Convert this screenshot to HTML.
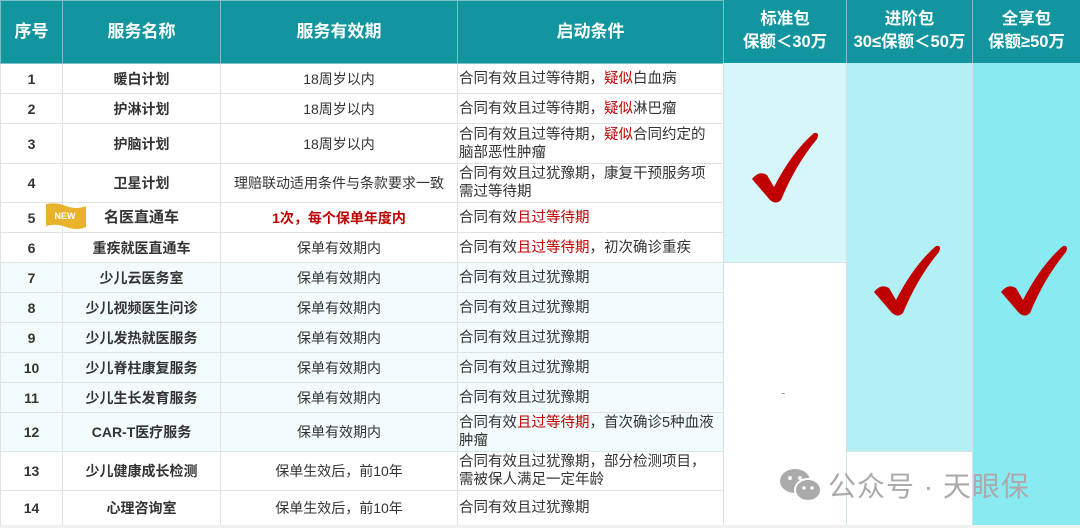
<!DOCTYPE html>
<html><head><meta charset="utf-8">
<style>
*{margin:0;padding:0;box-sizing:border-box}
body{width:1080px;height:528px;background:#fff;font-family:"Liberation Sans","Noto Sans CJK SC",sans-serif;position:relative;overflow:hidden;color:#333}
table{position:absolute;left:0;top:0;border-collapse:collapse;table-layout:fixed;width:723px}
td,th{border:1px solid #dfe3e6;font-size:14px;text-align:center;vertical-align:middle;padding:0;line-height:18px}
th{background:#13959f;color:#fff;font-size:17px;font-weight:bold;border-color:#7cbfc5;height:63px}
td.n{font-weight:bold;color:#333}
td.s{font-weight:bold;color:#333}
td.c{text-align:left;padding-left:1px;font-size:14.5px}
tr.l td{background:#f2fcfd}
.r{color:#c00000}
.hd{position:absolute;top:0;height:63px;background:#13959f;color:#fff;font-weight:bold;font-size:16.5px;text-align:center;line-height:23px;padding-top:8px;border-left:1px solid #7cbfc5}
.col{position:absolute;border-left:1px solid #d0e4e6}
.chk{position:absolute;width:70px;height:72px}
.new{position:absolute;left:45px;top:203px;width:42px;height:27px}
.wm{position:absolute;left:778px;top:465px;font-size:28px;color:#aaa;letter-spacing:1px}
</style></head><body>
<table>
<colgroup><col style="width:62px"><col style="width:158px"><col style="width:237px"><col style="width:266px"></colgroup>
<tr><th>序号</th><th>服务名称</th><th>服务有效期</th><th>启动条件</th></tr>
<tr style="height:30px"><td class="n">1</td><td class="s">暖白计划</td><td>18周岁以内</td><td class="c">合同有效且过等待期，<span class="r">疑似</span>白血病</td></tr>
<tr style="height:30px"><td class="n">2</td><td class="s">护淋计划</td><td>18周岁以内</td><td class="c">合同有效且过等待期，<span class="r">疑似</span>淋巴瘤</td></tr>
<tr style="height:40px"><td class="n">3</td><td class="s">护脑计划</td><td>18周岁以内</td><td class="c">合同有效且过等待期，<span class="r">疑似</span>合同约定的<br>脑部恶性肿瘤</td></tr>
<tr style="height:39px"><td class="n">4</td><td class="s">卫星计划</td><td>理赔联动适用条件与条款要求一致</td><td class="c">合同有效且过犹豫期，康复干预服务项<br>需过等待期</td></tr>
<tr style="height:30px"><td class="n">5</td><td class="s" style="font-size:15px">名医直通车</td><td class="r" style="font-weight:bold">1次，每个保单年度内</td><td class="c">合同有效<span class="r">且过等待期</span></td></tr>
<tr style="height:30px"><td class="n">6</td><td class="s">重疾就医直通车</td><td>保单有效期内</td><td class="c">合同有效<span class="r">且过等待期</span>，初次确诊重疾</td></tr>
<tr class="l" style="height:30px"><td class="n">7</td><td class="s">少儿云医务室</td><td>保单有效期内</td><td class="c">合同有效且过犹豫期</td></tr>
<tr class="l" style="height:30px"><td class="n">8</td><td class="s">少儿视频医生问诊</td><td>保单有效期内</td><td class="c">合同有效且过犹豫期</td></tr>
<tr class="l" style="height:30px"><td class="n">9</td><td class="s">少儿发热就医服务</td><td>保单有效期内</td><td class="c">合同有效且过犹豫期</td></tr>
<tr class="l" style="height:30px"><td class="n">10</td><td class="s">少儿脊柱康复服务</td><td>保单有效期内</td><td class="c">合同有效且过犹豫期</td></tr>
<tr class="l" style="height:30px"><td class="n">11</td><td class="s">少儿生长发育服务</td><td>保单有效期内</td><td class="c">合同有效且过犹豫期</td></tr>
<tr class="l" style="height:39px"><td class="n">12</td><td class="s">CAR-T医疗服务</td><td>保单有效期内</td><td class="c">合同有效<span class="r">且过等待期</span>，首次确诊5种血液<br>肿瘤</td></tr>
<tr style="height:39px"><td class="n">13</td><td class="s">少儿健康成长检测</td><td>保单生效后，前10年</td><td class="c">合同有效且过犹豫期，部分检测项目，<br>需被保人满足一定年龄</td></tr>
<tr style="height:35px"><td class="n">14</td><td class="s">心理咨询室</td><td>保单生效后，前10年</td><td class="c">合同有效且过犹豫期</td></tr>
</table>
<div class="hd" style="left:723px;width:123px">标准包<br>保额＜30万</div>
<div class="hd" style="left:846px;width:126px">进阶包<br>30≤保额＜50万</div>
<div class="hd" style="left:972px;width:108px">全享包<br>保额≥50万</div>
<div class="col" style="left:723px;top:63px;width:123px;height:199px;background:#d6f6f9"></div>
<div class="col" style="left:723px;top:262px;width:123px;height:263px;background:#fff;border-top:1px solid #dfe3e6"></div>
<div class="col" style="left:846px;top:63px;width:126px;height:388px;background:#b2f0f5"></div>
<div class="col" style="left:846px;top:451px;width:126px;height:74px;background:#fff;border-top:1px solid #dfe3e6"></div>
<div class="col" style="left:972px;top:63px;width:108px;height:462px;background:#8aeaf2"></div>
<div style="position:absolute;left:0;top:525px;width:1080px;height:3px;background:#eef0f1"></div>
<div style="position:absolute;left:781px;top:385px;font-size:13px;color:#999">-</div>
<svg class="chk" style="left:750px;top:132px" viewBox="0 0 70 72"><path d="M2 47 Q9 38 17 43 L24 55 Q42 20 64 1 Q70 0 67 7 Q46 32 31 68 Q26 73 20 68 Z" fill="#c00000"/></svg>
<svg class="chk" style="left:872px;top:245px" viewBox="0 0 70 72"><path d="M2 47 Q9 38 17 43 L24 55 Q42 20 64 1 Q70 0 67 7 Q46 32 31 68 Q26 73 20 68 Z" fill="#c00000"/></svg>
<svg class="chk" style="left:999px;top:245px" viewBox="0 0 70 72"><path d="M2 47 Q9 38 17 43 L24 55 Q42 20 64 1 Q70 0 67 7 Q46 32 31 68 Q26 73 20 68 Z" fill="#c00000"/></svg>
<svg class="new" viewBox="0 0 42 27"><path d="M1 1 Q12 -1 21 3 Q32 7 41 3 L41 24 Q32 28 21 24 Q12 20 1 23 Z" fill="#e8b22a"/><text x="20" y="16" font-size="9" font-weight="bold" fill="#fff" text-anchor="middle" font-family="Liberation Sans">NEW</text></svg>
<svg style="position:absolute;left:779px;top:467px" width="44" height="36" viewBox="0 0 44 36"><ellipse cx="16" cy="14" rx="15" ry="12" fill="#aaa"/><ellipse cx="29" cy="23" rx="13" ry="11" fill="#aaa" stroke="#fff" stroke-width="2"/><circle cx="11" cy="11" r="2" fill="#fff"/><circle cx="21" cy="11" r="2" fill="#fff"/><circle cx="25" cy="21" r="1.8" fill="#fff"/><circle cx="33" cy="21" r="1.8" fill="#fff"/></svg>
<div class="wm" style="left:828px">公众号 · 天眼保</div>
</body></html>
